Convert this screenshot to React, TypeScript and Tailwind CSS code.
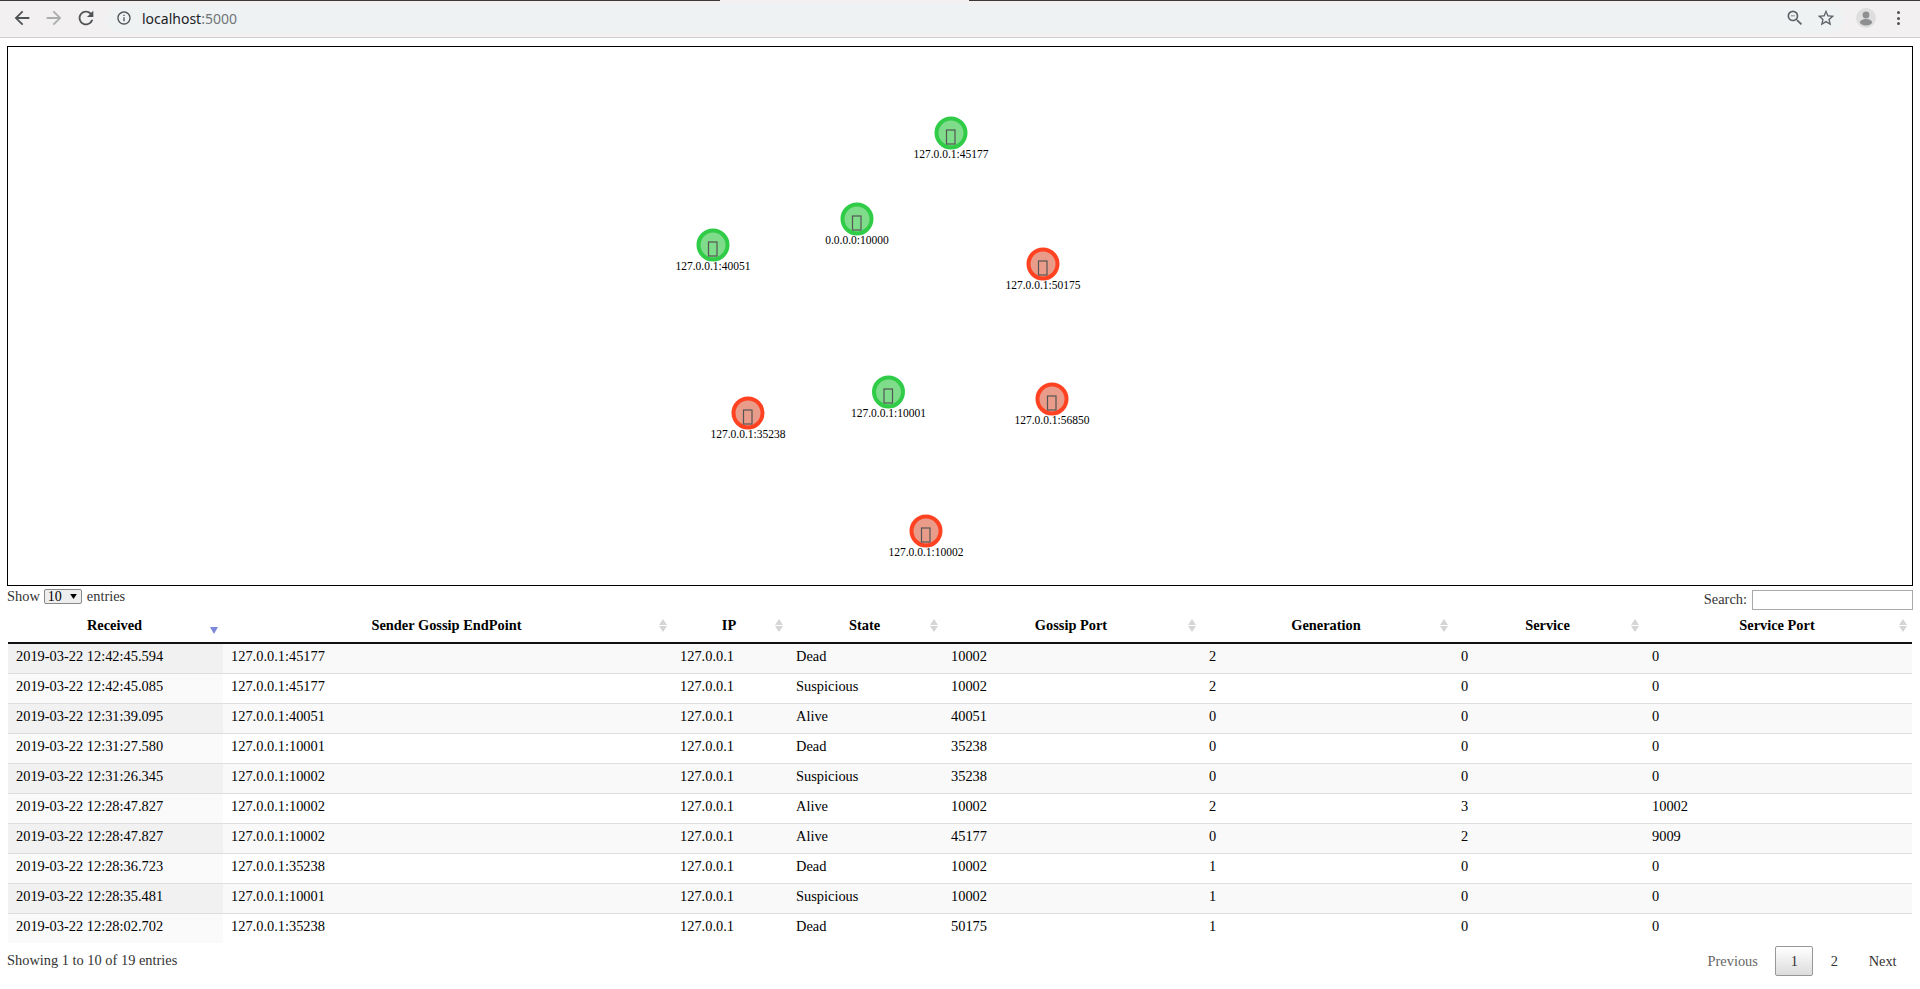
import React from "react";

const nodes = [
  { x: 951, y: 133, label: "127.0.0.1:45177", up: true },
  { x: 857, y: 219, label: "0.0.0.0:10000", up: true },
  { x: 713, y: 245, label: "127.0.0.1:40051", up: true },
  { x: 1043, y: 264, label: "127.0.0.1:50175", up: false },
  { x: 888.5, y: 392, label: "127.0.0.1:10001", up: true },
  { x: 1052, y: 399, label: "127.0.0.1:56850", up: false },
  { x: 748, y: 413, label: "127.0.0.1:35238", up: false },
  { x: 926, y: 531, label: "127.0.0.1:10002", up: false },
];

const columns = [
  { name: "Received", width: "w-[215px]" },
  { name: "Sender Gossip EndPoint", width: "w-[449px]" },
  { name: "IP", width: "w-[116px]" },
  { name: "State", width: "w-[155px]" },
  { name: "Gossip Port", width: "w-[258px]" },
  { name: "Generation", width: "w-[252px]" },
  { name: "Service", width: "w-[191px]" },
  { name: "Service Port", width: "w-[268px]" },
];

const rows = [
  ["2019-03-22 12:42:45.594", "127.0.0.1:45177", "127.0.0.1", "Dead", "10002", "2", "0", "0"],
  ["2019-03-22 12:42:45.085", "127.0.0.1:45177", "127.0.0.1", "Suspicious", "10002", "2", "0", "0"],
  ["2019-03-22 12:31:39.095", "127.0.0.1:40051", "127.0.0.1", "Alive", "40051", "0", "0", "0"],
  ["2019-03-22 12:31:27.580", "127.0.0.1:10001", "127.0.0.1", "Dead", "35238", "0", "0", "0"],
  ["2019-03-22 12:31:26.345", "127.0.0.1:10002", "127.0.0.1", "Suspicious", "35238", "0", "0", "0"],
  ["2019-03-22 12:28:47.827", "127.0.0.1:10002", "127.0.0.1", "Alive", "10002", "2", "3", "10002"],
  ["2019-03-22 12:28:47.827", "127.0.0.1:10002", "127.0.0.1", "Alive", "45177", "0", "2", "9009"],
  ["2019-03-22 12:28:36.723", "127.0.0.1:35238", "127.0.0.1", "Dead", "10002", "1", "0", "0"],
  ["2019-03-22 12:28:35.481", "127.0.0.1:10001", "127.0.0.1", "Suspicious", "10002", "1", "0", "0"],
  ["2019-03-22 12:28:02.702", "127.0.0.1:35238", "127.0.0.1", "Dead", "50175", "1", "0", "0"],
];

const Toolbar: React.FC = () => (
  <>
    <div className="flex h-px">
      <div className="w-[720px] bg-[#3b3836]"></div>
      <div className="w-[249px] bg-[#f2f0f0]"></div>
      <div className="flex-1 bg-[#3b3836]"></div>
    </div>
    <div className="flex h-[37px] items-center border-b border-[#cfcfcf] bg-[#f2f0f0] pb-[2px]">
      <svg viewBox="0 0 24 24" className="ml-[11px] h-[22px] w-[22px] fill-[#505356]">
        <path d="M20 11H7.83l5.59-5.59L12 4l-8 8 8 8 1.41-1.41L7.83 13H20v-2z" />
      </svg>
      <svg viewBox="0 0 24 24" className="ml-[10px] h-[22px] w-[22px] fill-[#aaacae]">
        <path d="M4 11h12.17l-5.59-5.59L12 4l8 8-8 8-1.41-1.41L16.17 13H4v-2z" />
      </svg>
      <svg viewBox="0 0 24 24" className="ml-[10px] h-[22px] w-[22px] fill-[#505356]">
        <path d="M17.65 6.35A7.958 7.958 0 0 0 12 4c-4.42 0-7.99 3.58-7.99 8s3.57 8 7.99 8c3.73 0 6.84-2.55 7.73-6h-2.08A5.99 5.99 0 0 1 12 18c-3.31 0-6-2.69-6-6s2.69-6 6-6c1.66 0 3.14.69 4.22 1.78L13 11h7V4l-2.35 2.35z" />
      </svg>
      <div className="ml-[10px] flex h-[29px] w-[1737px] items-center rounded-full bg-[#eff2f3]">
        <svg viewBox="0 0 24 24" className="ml-[9px] h-4 w-4 fill-[#505356]">
          <path d="M11 7h2v2h-2zm0 4h2v6h-2zm1-9C6.48 2 2 6.48 2 12s4.48 10 10 10 10-4.48 10-10S17.52 2 12 2zm0 18c-4.41 0-8-3.59-8-8s3.59-8 8-8 8 3.59 8 8-3.59 8-8 8z" />
        </svg>
        <span className="ml-[10px] text-[14px] text-[#202124] [font-family:'Noto_Sans',sans-serif]">
          localhost<span className="text-[#70757a]">:5000</span>
        </span>
        <svg viewBox="0 0 24 24" className="ml-auto h-[20px] w-[20px] fill-[#5f6368]">
          <path d="M15.5 14h-.79l-.28-.27A6.47 6.47 0 0 0 16 9.5 6.5 6.5 0 1 0 9.5 16c1.61 0 3.09-.59 4.23-1.57l.27.28v.79l5 4.99L20.49 19l-4.99-5zm-6 0C7.01 14 5 11.99 5 9.5S7.01 5 9.5 5 14 7.01 14 9.5 11.99 14 9.5 14zM7 9h5v1H7z" />
        </svg>
        <svg viewBox="0 0 24 24" className="ml-[11px] mr-[8px] h-[20px] w-[20px] fill-[#5f6368]">
          <path d="M22 9.24l-7.19-.62L12 2 9.19 8.63 2 9.24l5.46 4.73L5.82 21 12 17.27 18.18 21l-1.63-7.03L22 9.24zM12 15.4l-3.76 2.27 1-4.28-3.32-2.88 4.38-.38L12 6.1l1.71 4.04 4.38.38-3.32 2.88 1 4.28L12 15.4z" />
        </svg>
      </div>
      <div className="ml-[12px] flex h-5 w-5 items-center justify-center overflow-hidden rounded-full bg-[#dedede]">
        <svg viewBox="0 0 20 20" className="h-5 w-5 fill-[#8d8f91]">
          <circle cx="10" cy="7" r="3.4" />
          <ellipse cx="10" cy="14.2" rx="6" ry="3.2" />
        </svg>
      </div>
      <div className="ml-[21px] flex flex-col gap-[2.5px]">
        <div className="h-[3px] w-[3px] rounded-full bg-[#505356]"></div>
        <div className="h-[3px] w-[3px] rounded-full bg-[#505356]"></div>
        <div className="h-[3px] w-[3px] rounded-full bg-[#505356]"></div>
      </div>
    </div>
  </>
);

const Graph: React.FC = () => (
  <div className="mx-[7px] mt-[8px] h-[540px] border border-black bg-white">
    <svg className="block h-full w-full">
      {nodes.map((n) => (
        <g key={n.label} transform={`translate(${n.x - 8} ${n.y - 47})`}>
          <circle
            r="14.5"
            strokeWidth="4"
            fill={n.up ? "#7fdc8a" : "#e99c8a"}
            stroke={n.up ? "#30cc48" : "#ff4322"}
          />
          <rect x="-4.5" y="-3" width="8.5" height="14" fill="none" stroke="#555555" strokeWidth="1.2" />
          <text
            y="25"
            textAnchor="middle"
            fontSize="11.52"
            fill="#000000"
            fontFamily="'Liberation Serif', serif"
          >
            {n.label}
          </text>
        </g>
      ))}
    </svg>
  </div>
);

const SortArrows: React.FC<{ active?: boolean }> = ({ active }) =>
  active ? (
    <svg viewBox="0 0 8 7" className="absolute right-[5px] top-[18px] h-[7px] w-[8px] fill-[#7e88d8]">
      <path d="M0 0h8L4 7z" />
    </svg>
  ) : (
    <svg viewBox="0 0 8 13" className="absolute right-[5px] top-[10px] h-[13px] w-[8px] fill-[#d5d5d5]">
      <path d="M4 0l4 6H0zM0 7h8l-4 6z" />
    </svg>
  );

const DataTable: React.FC = () => (
  <table className="w-[1904px] table-fixed border-collapse">
    <colgroup>
      {columns.map((c) => (
        <col key={c.name} className={c.width} />
      ))}
    </colgroup>
    <thead>
      <tr className="h-[34px] border-b-2 border-[#111111]">
        {columns.map((c, i) => (
          <th key={c.name} className="relative pr-[2px] text-center font-bold text-black">
            {c.name}
            <SortArrows active={i === 0} />
          </th>
        ))}
      </tr>
    </thead>
    <tbody>
      {rows.map((row, r) => (
        <tr
          key={r}
          className={`h-[30px] ${r < rows.length - 1 ? "border-b border-[#dddddd]" : ""} ${
            r % 2 === 0 ? "bg-[#f9f9f9]" : "bg-white"
          }`}
        >
          {row.map((cell, c) => (
            <td
              key={c}
              className={`px-[8px] pb-[2px] text-black ${
                c === 0 ? (r % 2 === 0 ? "bg-[#f1f1f1]" : "bg-[#fafafa]") : ""
              }`}
            >
              {cell}
            </td>
          ))}
        </tr>
      ))}
    </tbody>
  </table>
);

export default function App() {
  return (
    <div className="h-[989px] overflow-hidden bg-white text-[14.4px] text-[#333333] [font-family:'Liberation_Serif',serif]">
      <Toolbar />
      <Graph />
      <div className="mx-[7px] flex h-[23px] items-start justify-between">
        <label className="flex items-center pt-[2px] leading-[17px]">
          Show
          <span className="relative ml-[4px] mr-[5px] inline-block">
            <select className="block h-[15px] w-[38px] appearance-none rounded-[2px] border border-[#8a8a8a] bg-[#eeeeee] pl-[3px] text-[14px] leading-[13px] text-black">
              <option>10</option>
              <option>25</option>
              <option>50</option>
            </select>
            <svg viewBox="0 0 8 6" className="pointer-events-none absolute right-[5px] top-[5px] h-[5px] w-[7px] fill-black">
              <path d="M0 0h8L4 6z" />
            </svg>
          </span>
          entries
        </label>
        <label className="mt-[3px] flex items-center">
          Search:
          <input className="ml-[5px] h-[20px] w-[161px] border border-[#a9a9a9] bg-white" type="search" />
        </label>
      </div>
      <div className="mx-[8px]">
        <DataTable />
      </div>
      <div className="ml-[7px] mr-[8px] mt-[3px] flex items-start justify-between">
        <div className="pt-[6px] leading-[17px]">Showing 1 to 10 of 19 entries</div>
        <div className="flex items-center">
          <a className="border border-transparent px-[14.4px] py-[5px] leading-[18px] text-[#666666]">Previous</a>
          <a className="ml-[2px] rounded-[2px] border border-[#979797] bg-gradient-to-b from-white to-[#dcdcdc] px-[14.4px] py-[5px] leading-[18px] text-[#333333]">
            1
          </a>
          <a className="ml-[2px] border border-transparent px-[14.4px] py-[5px] leading-[18px] text-[#333333]">2</a>
          <a className="border border-transparent px-[14.4px] py-[5px] leading-[18px] text-[#333333]">Next</a>
        </div>
      </div>
    </div>
  );
}
